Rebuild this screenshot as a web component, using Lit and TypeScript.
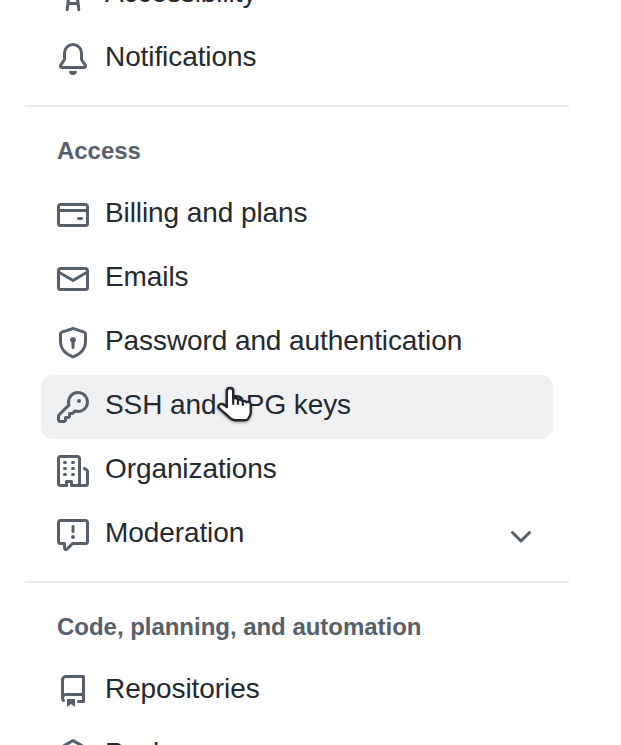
import { LitElement, html, css, nothing } from "lit";
import { customElement, property } from "lit/decorators.js";

const icons: Record<string, string> = {
  accessibility: "M9.923 5.302c.063.063.122.129.178.198H14A.75.75 0 0 1 14 7h-3.3l.578 5.163.362 2.997a.75.75 0 0 1-1.49.18L9.868 13H6.132l-.282 2.34a.75.75 0 0 1-1.49-.18l.362-2.997L5.3 7H2a.75.75 0 0 1 0-1.5h3.9a2.54 2.54 0 0 1 .176-.198 3 3 0 1 1 3.847 0ZM9.2 7.073h-.001a1.206 1.206 0 0 0-2.398 0L6.305 11.5h3.39ZM9.5 3a1.5 1.5 0 1 0-3.001.001A1.5 1.5 0 0 0 9.5 3Z",
  bell: "M8 16a2 2 0 0 0 1.985-1.75c.017-.137-.097-.25-.235-.25h-3.5c-.138 0-.252.113-.235.25A2 2 0 0 0 8 16ZM3 5a5 5 0 0 1 10 0v2.947c0 .05.015.098.042.139l1.703 2.555A1.519 1.519 0 0 1 13.482 13H2.518a1.516 1.516 0 0 1-1.263-2.36l1.703-2.554A.255.255 0 0 0 3 7.947Zm5-3.5A3.5 3.5 0 0 0 4.5 5v2.947c0 .346-.102.683-.294.97l-1.703 2.556a.017.017 0 0 0-.003.01l.001.006c0 .002.002.004.004.006l.006.004.007.001h10.964l.007-.001.006-.004.004-.006.001-.007a.017.017 0 0 0-.003-.01l-1.703-2.554a1.745 1.745 0 0 1-.294-.97V5A3.5 3.5 0 0 0 8 1.5Z",
  card: "M10.75 9a.75.75 0 0 0 0 1.5h1.5a.75.75 0 0 0 0-1.5h-1.5ZM0 3.75C0 2.784.784 2 1.75 2h12.5c.966 0 1.75.784 1.75 1.75v8.5A1.75 1.75 0 0 1 14.25 14H1.75A1.75 1.75 0 0 1 0 12.25ZM14.5 6.5h-13v5.75c0 .138.112.25.25.25h12.5a.25.25 0 0 0 .25-.25Zm0-2.75a.25.25 0 0 0-.25-.25H1.75a.25.25 0 0 0-.25.25V5h13Z",
  mail: "M1.75 2h12.5c.966 0 1.75.784 1.75 1.75v8.5A1.75 1.75 0 0 1 14.25 14H1.75A1.75 1.75 0 0 1 0 12.25v-8.5C0 2.784.784 2 1.75 2ZM1.5 12.251c0 .138.112.25.25.25h12.5a.25.25 0 0 0 .25-.25V5.809L8.38 9.397a.75.75 0 0 1-.76 0L1.5 5.809v6.442Zm13-8.181v-.32a.25.25 0 0 0-.25-.25H1.75a.25.25 0 0 0-.25.25v.32L8 7.88Z",
  shield: "m8.533.133 5.25 1.68A1.75 1.75 0 0 1 15 3.48V7c0 1.566-.32 3.182-1.303 4.682-.983 1.498-2.585 2.813-5.032 3.855a1.697 1.697 0 0 1-1.33 0c-2.447-1.042-4.049-2.357-5.032-3.855C1.32 10.182 1 8.566 1 7V3.48a1.75 1.75 0 0 1 1.217-1.667l5.25-1.68a1.748 1.748 0 0 1 1.066 0Zm-.61 1.429.001.001-5.25 1.68a.251.251 0 0 0-.174.237V7c0 1.36.275 2.666 1.057 3.859.784 1.194 2.121 2.342 4.366 3.298a.196.196 0 0 0 .154 0c2.245-.957 3.582-2.103 4.366-3.297C13.225 9.666 13.5 8.358 13.5 7V3.48a.25.25 0 0 0-.174-.238l-5.25-1.68a.25.25 0 0 0-.153 0ZM9.5 6.5c0 .536-.286 1.032-.75 1.3v2.45a.75.75 0 0 1-1.5 0V7.8A1.5 1.5 0 1 1 9.5 6.5Z",
  key: "M10.5 0a5.499 5.499 0 1 1-1.288 10.848l-.932.932a.749.749 0 0 1-.53.22H7v.75a.749.749 0 0 1-.22.53l-.5.5a.749.749 0 0 1-.53.22H5v.75a.749.749 0 0 1-.22.53l-.5.5a.749.749 0 0 1-.53.22h-2A1.75 1.75 0 0 1 0 14.25v-2c0-.199.079-.389.22-.53l4.932-4.932A5.5 5.5 0 0 1 10.5 0Zm-4 5.5c-.001.431.069.86.205 1.269a.75.75 0 0 1-.181.768L1.5 12.56v1.69c0 .138.112.25.25.25h1.69l.06-.06v-1.19a.75.75 0 0 1 .75-.75h1.19l.06-.06v-1.19a.75.75 0 0 1 .75-.75h1.19l1.023-1.025a.75.75 0 0 1 .768-.18A4 4 0 1 0 6.5 5.5ZM11 6a1 1 0 1 1 0-2 1 1 0 0 1 0 2Z",
  organization: "M1.75 16A1.75 1.75 0 0 1 0 14.25V1.75C0 .784.784 0 1.75 0h8.5C11.216 0 12 .784 12 1.75v12.5c0 .085-.006.168-.018.25h2.268a.25.25 0 0 0 .25-.25V8.285a.25.25 0 0 0-.111-.208l-1.055-.703a.749.749 0 1 1 .832-1.248l1.055.703c.487.325.779.871.779 1.456v5.965A1.75 1.75 0 0 1 14.25 16h-3.5a.766.766 0 0 1-.197-.026c-.099.017-.2.026-.303.026h-3a.75.75 0 0 1-.75-.75V14h-1v1.25a.75.75 0 0 1-.75.75Zm-.25-1.75c0 .138.112.25.25.25H4v-1.25a.75.75 0 0 1 .75-.75h2.5a.75.75 0 0 1 .75.75v1.25h2.25a.25.25 0 0 0 .25-.25V1.75a.25.25 0 0 0-.25-.25h-8.5a.25.25 0 0 0-.25.25ZM3.75 6h.5a.75.75 0 0 1 0 1.5h-.5a.75.75 0 0 1 0-1.5ZM3 3.75A.75.75 0 0 1 3.75 3h.5a.75.75 0 0 1 0 1.5h-.5A.75.75 0 0 1 3 3.75Zm4 3A.75.75 0 0 1 7.75 6h.5a.75.75 0 0 1 0 1.5h-.5A.75.75 0 0 1 7 6.75ZM7.75 3h.5a.75.75 0 0 1 0 1.5h-.5a.75.75 0 0 1 0-1.5ZM3 9.75A.75.75 0 0 1 3.75 9h.5a.75.75 0 0 1 0 1.5h-.5A.75.75 0 0 1 3 9.75ZM7.75 9h.5a.75.75 0 0 1 0 1.5h-.5a.75.75 0 0 1 0-1.5Z",
  report: "M0 1.75C0 .784.784 0 1.75 0h12.5C15.216 0 16 .784 16 1.75v9.5A1.75 1.75 0 0 1 14.25 13H8.06l-2.573 2.573A1.458 1.458 0 0 1 3 14.543V13H1.75A1.75 1.75 0 0 1 0 11.25Zm1.75-.25a.25.25 0 0 0-.25.25v9.5c0 .138.112.25.25.25h2a.75.75 0 0 1 .75.75v2.19l2.72-2.72a.749.749 0 0 1 .53-.22h6.5a.25.25 0 0 0 .25-.25v-9.5a.25.25 0 0 0-.25-.25Zm7 2.25v2.5a.75.75 0 0 1-1.5 0v-2.5a.75.75 0 0 1 1.5 0ZM9 9a1 1 0 1 1-2 0 1 1 0 0 1 2 0Z",
  repo: "M2 2.5A2.5 2.5 0 0 1 4.5 0h8.75a.75.75 0 0 1 .75.75v12.5a.75.75 0 0 1-.75.75h-2.5a.75.75 0 0 1 0-1.5h1.75v-2h-8a1 1 0 0 0-.714 1.7.75.75 0 1 1-1.072 1.05A2.495 2.495 0 0 1 2 11.5Zm10.5-1h-8a1 1 0 0 0-1 1v6.708A2.486 2.486 0 0 1 4.5 9h8ZM5 12.25a.25.25 0 0 1 .25-.25h3.5a.25.25 0 0 1 .25.25v3.25a.25.25 0 0 1-.4.2l-1.45-1.087a.249.249 0 0 0-.3 0L5.4 15.7a.25.25 0 0 1-.4-.2Z",
  package: "m8.878.392 5.25 3.045c.54.314.872.89.872 1.514v6.098a1.75 1.75 0 0 1-.872 1.514l-5.25 3.045a1.75 1.75 0 0 1-1.756 0l-5.25-3.045A1.75 1.75 0 0 1 1 11.049V4.951c0-.624.332-1.201.872-1.514L7.122.392a1.75 1.75 0 0 1 1.756 0ZM7.875 1.69l-4.63 2.685L8 7.133l4.755-2.758-4.63-2.685a.248.248 0 0 0-.25 0ZM2.5 5.677v5.372c0 .09.047.171.125.216l4.625 2.683V8.432Zm6.25 8.271 4.625-2.683a.25.25 0 0 0 .125-.216V5.677L8.75 8.432Z",
  chevron: "M12.78 5.22a.749.749 0 0 1 0 1.06l-4.25 4.25a.749.749 0 0 1-1.06 0L3.22 6.28a.749.749 0 1 1 1.06-1.06L8 8.939l3.72-3.719a.749.749 0 0 1 1.06 0Z",
};

const icon = (name: string) =>
  html`<svg class="icon" viewBox="0 0 16 16" aria-hidden="true"><path d=${icons[name]}></path></svg>`;

@customElement("nav-item")
class NavItem extends LitElement {
  @property() icon = "";
  @property() label = "";
  @property({ type: Boolean }) expandable = false;
  @property({ type: Boolean, reflect: true }) active = false;

  static styles = css`
    :host {
      display: flex;
      align-items: center;
      box-sizing: border-box;
      height: 64px;
      margin: 0 16px;
      padding: 0 16px;
      gap: 16px;
      border-radius: 12px;
      color: #24292f;
    }
    :host([active]) {
      background: #f0f1f3;
    }
    .icon {
      display: block;
      flex: none;
      width: 32px;
      height: 32px;
      fill: #57606a;
    }
    .label {
      flex: 1;
      font-size: 28px;
      line-height: 40px;
      letter-spacing: -0.09px;
      padding-bottom: 5px;
      white-space: nowrap;
    }
    .toggle {
      padding-top: 4px;
    }
  `;

  render() {
    return html`
      ${icon(this.icon)}
      <span class="label">${this.label}</span>
      ${this.expandable ? html`<span class="toggle">${icon("chevron")}</span>` : nothing}
    `;
  }
}

@customElement("app-root")
class AppRoot extends LitElement {
  static styles = css`
    :host {
      display: block;
      height: 745px;
      overflow: hidden;
      position: relative;
      background: #fff;
      font-family: "Liberation Sans", Arial, sans-serif;
    }
    nav {
      width: 544px;
      margin: -37px 0 0 25px;
      display: flow-root;
    }
    .group {
      margin-top: 14px;
      border-top: 2px solid #e8ebef;
    }
    h2 {
      margin: 0;
      padding: 26px 32px 14px;
      font-size: 24px;
      line-height: 36px;
      font-weight: 700;
      letter-spacing: -0.03px;
      color: #57606a;
    }
    .pointer {
      position: absolute;
      left: 212px;
      top: 382px;
      width: 46px;
      height: 46px;
      filter: drop-shadow(0 1.5px 1.5px rgba(0, 0, 0, 0.4));
    }
  `;

  render() {
    return html`
      <nav>
        <nav-item icon="accessibility" label="Accessibility"></nav-item>
        <nav-item icon="bell" label="Notifications"></nav-item>
        <section class="group">
          <h2>Access</h2>
          <nav-item icon="card" label="Billing and plans"></nav-item>
          <nav-item icon="mail" label="Emails"></nav-item>
          <nav-item icon="shield" label="Password and authentication"></nav-item>
          <nav-item icon="key" label="SSH and GPG keys" active></nav-item>
          <nav-item icon="organization" label="Organizations"></nav-item>
          <nav-item icon="report" label="Moderation" expandable></nav-item>
        </section>
        <section class="group">
          <h2>Code, planning, and automation</h2>
          <nav-item icon="repo" label="Repositories"></nav-item>
          <nav-item icon="package" label="Packages"></nav-item>
        </section>
      </nav>
      <svg class="pointer" viewBox="0 0 46 46" aria-hidden="true">
        <path
          d="M14.8 25V9Q14.8 6 18 6Q21.2 6 21.2 9V16.5Q24.5 15 26 17.8Q29 16.8 30.6 19.2Q33 18.2 34.3 20.2Q38.6 19 38.8 23V30Q38.6 34 36 37Q34.8 38.2 32.5 38.2H23Q20.5 38.2 18.5 36.4L7 26.2Q5.5 24.2 7.5 22.6Q9.4 21.2 11.4 22.4Z"
          fill="#fff" stroke="#23262a" stroke-width="2.4" stroke-linejoin="round"></path>
        <path d="M21.2 15V22M26 17.5V22M30.8 19V23" fill="none" stroke="#23262a" stroke-width="2.2" stroke-linecap="round"></path>
      </svg>
    `;
  }
}
